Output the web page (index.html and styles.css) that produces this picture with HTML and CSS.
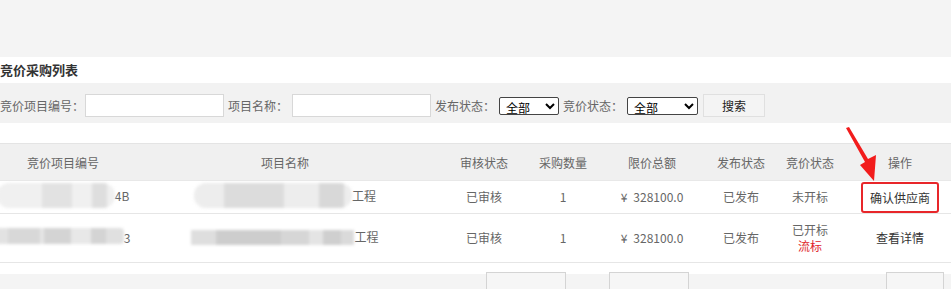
FILE: index.html
```html
<!DOCTYPE html>
<html>
<head>
<meta charset="utf-8">
<meta name="viewport" content="width=device-width, initial-scale=1">
<link rel="stylesheet" href="styles.css">
</head>
<body>

<div class="top-space"></div>

<div class="title-bar">竞价采购列表</div>

<div class="search-bar">
  <label class="lbl lbl-first">竞价项目编号：</label>
  <input type="text" class="txt">
  <label class="lbl">项目名称：</label>
  <input type="text" class="txt">
  <label class="lbl">发布状态：</label>
  <select class="sel sel-a"><option>全部</option></select>
  <label class="lbl">竞价状态：</label>
  <select class="sel sel-b"><option>全部</option></select>
  <button class="btn-search">搜索</button>
</div>

<div class="list-wrap">
  <table class="list">
    <colgroup>
      <col class="c1"><col class="c2"><col class="c3"><col class="c4">
      <col class="c5"><col class="c6"><col class="c7"><col class="c8">
    </colgroup>
    <thead>
      <tr>
        <th>竞价项目编号</th>
        <th>项目名称</th>
        <th>审核状态</th>
        <th>采购数量</th>
        <th>限价总额</th>
        <th>发布状态</th>
        <th>竞价状态</th>
        <th>操作</th>
      </tr>
    </thead>
    <tbody>
      <tr class="row-a">
        <td><span class="cell-in"><span class="blur blur-a1"></span>4B</span></td>
        <td><span class="cell-in"><span class="blur blur-a2"></span>工程</span></td>
        <td>已审核</td>
        <td>1</td>
        <td><span class="yen">¥</span>328100.0</td>
        <td>已发布</td>
        <td>未开标</td>
        <td><span class="op op-marked">确认供应商</span></td>
      </tr>
      <tr class="row-b">
        <td><span class="cell-in"><span class="blur blur-b1"></span>3</span></td>
        <td><span class="cell-in"><span class="blur blur-b2"></span>工程</span></td>
        <td>已审核</td>
        <td>1</td>
        <td><span class="yen">¥</span>328100.0</td>
        <td>已发布</td>
        <td>已开标<br><span class="fail">流标</span></td>
        <td><span class="op">查看详情</span></td>
      </tr>
    </tbody>
  </table>

  <!-- annotation arrow -->
  <svg class="arrow" width="40" height="60" viewBox="840 124 40 60">
    <polygon points="846,128 849,127 868,159 876,155 874,181 860,165 865,162" fill="#f21c1c"/>
  </svg>
</div>

<div class="pager">
  <span class="pg-box pg-1"></span>
  <span class="pg-box pg-2"></span>
  <span class="pg-box pg-3"></span>
</div>

</body>
</html>
```

FILE: styles.css
```css
* {
  box-sizing: border-box;
}

html, body {
  overflow: hidden;
}

body {
  margin: 0;
  font-family: "Noto Sans CJK SC", "Noto Sans", sans-serif;
  font-size: 12px;
  color: #666;
  background: #fff;
}

.top-space {
  height: 57px;
  background: #f4f4f4;
}

.title-bar {
  height: 26px;
  line-height: 26px;
  font-size: 13px;
  font-weight: bold;
  color: #333;
  background: #fff;
}

.search-bar {
  height: 40px;
  padding-top: 11px;
  display: flex;
  align-items: flex-start;
  background: #f2f2f2;
}

.search-bar > * {
  flex: none;
}

.lbl {
  line-height: 23px;
  margin-left: 4px;
  margin-right: 4px;
}

.lbl-first {
  margin-left: 0;
  margin-right: 1px;
}

.txt {
  width: 139px;
  height: 23px;
  border: 1px solid #d8d8d8;
  background: #fff;
  margin: 0;
}

.sel {
  height: 18px;
  border: 1px solid #444;
  border-radius: 2px;
  background: #fff;
  font-family: "Noto Sans CJK SC", sans-serif;
  font-size: 12px;
  color: #000;
  padding: 0 0 0 2px;
  margin: 3px 0 0 0;
}

.sel-a {
  width: 60px;
}

.sel-b {
  width: 71px;
}

.btn-search {
  width: 62px;
  height: 23px;
  margin-left: 5px;
  border: 1px solid #e0e0e0;
  background: #f4f4f4;
  font-family: "Noto Sans CJK SC", sans-serif;
  font-size: 12px;
  color: #222;
  padding: 0;
}

.list-wrap {
  position: relative;
  padding-top: 20px;
  background: #fff;
}

.list {
  border-collapse: collapse;
  table-layout: fixed;
  width: 960px;
}

.c1 { width: 126px; }
.c2 { width: 318px; }
.c3 { width: 80px; }
.c4 { width: 78px; }
.c5 { width: 100px; }
.c6 { width: 78px; }
.c7 { width: 60px; }
.c8 { width: 120px; }

.list th {
  height: 37px;
  font-weight: normal;
  color: #666;
  background: #f0f0f0;
  border-top: 1px solid #e4e4e4;
  border-bottom: 1px solid #e8e8e8;
  padding: 0;
  white-space: nowrap;
}

.list td {
  text-align: center;
  padding: 0;
  border-bottom: 1px solid #e6e6e6;
  white-space: nowrap;
  line-height: 16px;
}

.row-a td {
  height: 33px;
}

.row-b td {
  height: 49px;
}

.cell-in {
  display: inline-flex;
  align-items: center;
  margin: 0 -40px;
}

.blur {
  display: inline-block;
  filter: blur(1.5px);
}

.blur-a1 {
  width: 118px;
  height: 25px;
  border-radius: 12px;
  background:
    linear-gradient(90deg, transparent 0 45px, #e2e2e2 45px 75px, transparent 75px 95px, #dedede 95px 110px, transparent 110px),
    #f0f0f0;
}

.blur-a2 {
  width: 158px;
  height: 25px;
  border-radius: 12px;
  background:
    linear-gradient(90deg, transparent 0 30px, #dcdcdc 30px 90px, transparent 90px 125px, #d8d8d8 125px 150px, transparent 150px),
    #ededed;
}

.blur-b1 {
  width: 128px;
  height: 16px;
  margin-top: -4px;
  border-radius: 4px;
  background: linear-gradient(90deg, #e2e2e2 0 12px, #d8d8d8 12px 44px, #e6e6e6 44px 48px, #d4d4d4 48px 75px, #e8e8e8 75px 95px, #d4d4d4 95px 110px, #e0e0e0 110px);
}

.blur-b2 {
  width: 163px;
  height: 15px;
  margin-top: 2px;
  background: linear-gradient(90deg, #dedede 0 25px, #cdcdcd 25px 90px, #d6d6d6 90px 118px, #e4e4e4 118px 132px, #cfcfcf 132px 150px, #dadada 150px);
}

.yen {
  margin-right: 6px;
}

.op {
  color: #333;
}

.op-marked {
  display: inline-block;
  line-height: 27px;
  padding: 0 7px;
  border: 2px solid #e8262a;
  border-radius: 3px;
}

.fail {
  color: #e0262b;
}

.arrow {
  position: absolute;
  left: 840px;
  top: 1px;
}

.pager {
  display: flex;
  height: 30px;
  padding-top: 9px;
  background: linear-gradient(#fff 0 11px, #f4f4f4 11px);
}

.pg-box {
  height: 20px;
  border: 1px solid #d4d4d4;
  border-bottom: none;
  background: #f6f6f6;
}

.pg-1 {
  width: 80px;
  margin-left: 486px;
}

.pg-2 {
  width: 80px;
  margin-left: 43px;
}

.pg-3 {
  width: 58px;
  margin-left: 197px;
}
```
